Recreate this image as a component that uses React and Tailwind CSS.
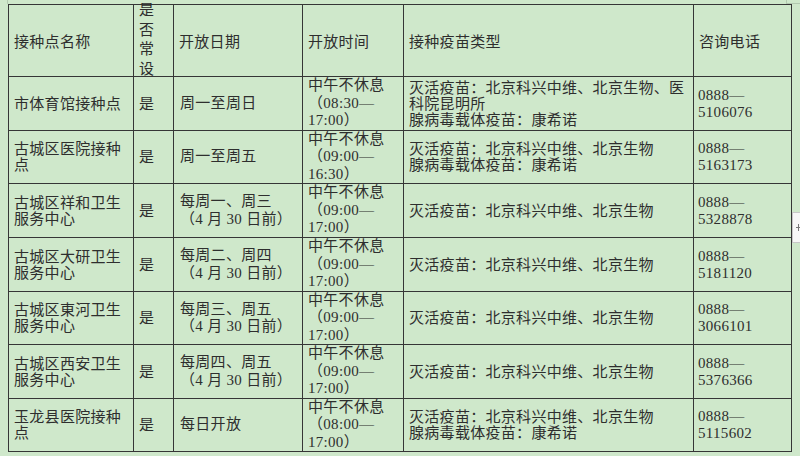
import React from "react";

const rows = [
  {
    name: "市体育馆接种点",
    date: ["周一至周日"],
    time: ["08:30", "17:00"],
    vaccine: ["灭活疫苗：北京科兴中维、北京生物、医科院昆明所", "腺病毒载体疫苗：康希诺"],
    phone: "5106076",
  },
  {
    name: "古城区医院接种点",
    date: ["周一至周五"],
    time: ["09:00", "16:30"],
    vaccine: ["灭活疫苗：北京科兴中维、北京生物", "腺病毒载体疫苗：康希诺"],
    phone: "5163173",
  },
  {
    name: "古城区祥和卫生服务中心",
    date: ["每周一、周三", "（4 月 30 日前）"],
    time: ["09:00", "17:00"],
    vaccine: ["灭活疫苗：北京科兴中维、北京生物"],
    phone: "5328878",
  },
  {
    name: "古城区大研卫生服务中心",
    date: ["每周二、周四", "（4 月 30 日前）"],
    time: ["09:00", "17:00"],
    vaccine: ["灭活疫苗：北京科兴中维、北京生物"],
    phone: "5181120",
  },
  {
    name: "古城区東河卫生服务中心",
    date: ["每周三、周五", "（4 月 30 日前）"],
    time: ["09:00", "17:00"],
    vaccine: ["灭活疫苗：北京科兴中维、北京生物"],
    phone: "3066101",
  },
  {
    name: "古城区西安卫生服务中心",
    date: ["每周四、周五", "（4 月 30 日前）"],
    time: ["09:00", "17:00"],
    vaccine: ["灭活疫苗：北京科兴中维、北京生物"],
    phone: "5376366",
  },
  {
    name: "玉龙县医院接种点",
    date: ["每日开放"],
    time: ["08:00", "17:00"],
    vaccine: ["灭活疫苗：北京科兴中维、北京生物", "腺病毒载体疫苗：康希诺"],
    phone: "5115602",
  },
];

const cell = "bg-[#cfe8cb] px-[5px] flex flex-col justify-center min-w-0";

export default function App() {
  return (
    <div className="relative w-[800px] h-[456px] overflow-hidden bg-[#cfe8cb] text-[#2e2e2e] text-[15px] tracking-[0.3px] font-['Liberation_Serif','Noto_Sans_CJK_SC',serif]">
      {/* faint edges from the page behind */}
      <div className="absolute left-[7px] top-0 w-px h-[4px] bg-[#b3c9b0]"></div>
      <div className="absolute left-[786px] top-0 w-px h-[3px] bg-[#b3c9b0]"></div>
      <div className="absolute left-[786px] top-[3px] w-[14px] h-px bg-[#b3c9b0]"></div>

      <div className="ml-[8px] mt-[4px] w-[784px] grid gap-px p-px bg-[#363636] grid-cols-[124px_39px_128px_100px_289px_97px] grid-rows-[71px_53px_52px_53px_53px_52px_53px_52px]">
        {/* HEADER */}
        <div className={`${cell} leading-[16px] pt-[3px]`}>接种点名称</div>
        <div className="bg-[#cfe8cb] pl-[5px] pt-[-2px] leading-[19.5px] relative">
          <div className="absolute left-[5px] top-[-4px]">
            <div>是</div>
            <div>否</div>
            <div>常</div>
            <div>设</div>
          </div>
        </div>
        <div className={`${cell} leading-[16px] pt-[3px]`}>开放日期</div>
        <div className={`${cell} leading-[16px] pt-[3px]`}>开放时间</div>
        <div className={`${cell} leading-[16px] pt-[3px]`}>接种疫苗类型</div>
        <div className={`${cell} leading-[16px] pt-[3px]`}>咨询电话</div>

        {/* ROWS */}
        {rows.map((r) => (
          <React.Fragment key={r.name}>
            <div className={`${cell} leading-[16px]`}>{r.name}</div>
            <div className={`${cell} leading-[16px]`}>是</div>
            <div className={`${cell} leading-[17.5px] pl-[6px]`}>
              {r.date.map((d) => (
                <div key={d}>{d}</div>
              ))}
            </div>
            <div className={`${cell} leading-[17.5px] whitespace-nowrap`}>
              <div>中午不休息</div>
              <div>（{r.time[0]}—</div>
              <div>{r.time[1]}）</div>
            </div>
            <div className={`${cell} leading-[16px]`}>
              {r.vaccine.map((v) => (
                <div key={v}>{v}</div>
              ))}
            </div>
            <div className={`${cell} leading-[17px] pl-[4px]`}>
              <div>0888—</div>
              <div>{r.phone}</div>
            </div>
          </React.Fragment>
        ))}
      </div>

      {/* add-row handle on the right edge */}
      <div className="absolute left-[792px] top-[212px] w-[10px] h-[31px] bg-[#f7f7f7] border border-[#c8c8c8]">
        <div className="absolute left-[3px] top-[14px] w-[6px] h-px bg-[#777]"></div>
        <div className="absolute left-[5px] top-[11px] w-px h-[7px] bg-[#777]"></div>
      </div>
    </div>
  );
}
